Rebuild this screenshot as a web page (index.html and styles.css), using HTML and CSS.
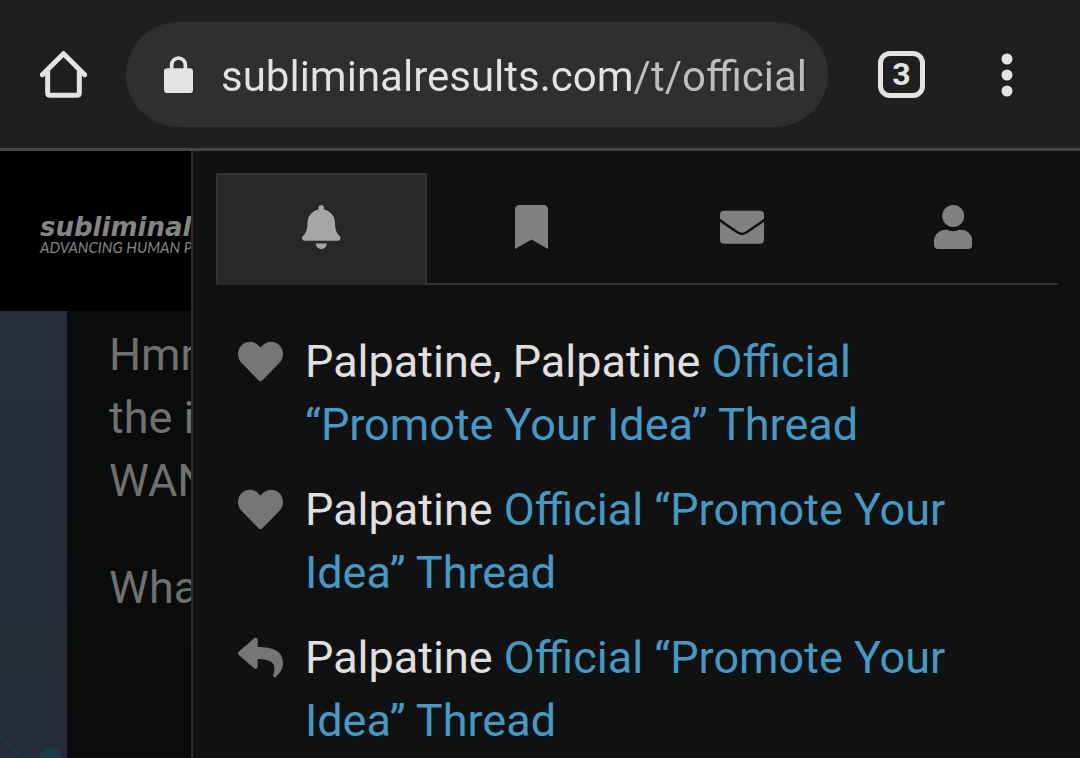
FILE: index.html
```html
<!DOCTYPE html>
<html lang="en">
<head>
<meta charset="utf-8">
<meta name="viewport" content="width=device-width, initial-scale=1">
<title>Official “Promote Your Idea” Thread</title>
<link rel="stylesheet" href="styles.css">
</head>
<body>
<header class="toolbar">
  <button class="icon-button" type="button" aria-label="Home">
    <svg class="home-icon" viewBox="0 0 141 141" aria-hidden="true"><path d="M7 71 70.500 8 134 71M23 60v65q0 8 8 8h79q8 0 8-8V60" fill="none" stroke="currentColor" stroke-width="15" stroke-linecap="round" stroke-linejoin="round"/></svg>
  </button>
  <div class="address">
    <svg class="lock-icon" viewBox="0 0 87 111" aria-hidden="true"><rect y="37" width="87" height="74" rx="10" fill="currentColor"/><path d="M23 42V27a20.500 21 0 0 1 41 0v15" fill="none" stroke="currentColor" stroke-width="11"/></svg>
    <input class="url" type="text" aria-label="Address" value="subliminalresults.com/t/official">
  </div>
  <button class="icon-button tab-count" type="button" aria-label="3 open tabs">3</button>
  <button class="icon-button menu" type="button" aria-label="Menu">
    <svg class="menu-icon" viewBox="0 0 12 44" aria-hidden="true"><g fill="currentColor"><circle cx="6" cy="6" r="5.500"/><circle cx="6" cy="22" r="5.500"/><circle cx="6" cy="38" r="5.500"/></g></svg>
  </button>
</header>
<main class="screen">
  <div class="page">
    <div class="brand">
      <div class="brand-name">subliminal</div>
      <div class="brand-tagline">ADVANCING HUMAN P</div>
    </div>
    <div class="page-body">
      <div class="backdrop">
        <svg class="network" viewBox="0 0 67 60" aria-hidden="true"><path d="M0 39 26 62" fill="none" stroke="#16394c" stroke-width="2"/><circle cx="51" cy="62" r="12" fill="#1d3a4a"/></svg>
      </div>
      <article class="post">
        <p>Hmm<br>the i<br>WAN</p>
        <p>What</p>
      </article>
    </div>
  </div>
  <aside class="panel">
    <nav class="tabs" aria-label="User menu">
      <button class="tab tab-active" type="button" aria-label="Notifications">
        <svg class="tab-icon" viewBox="0 0 448 512" aria-hidden="true"><path fill="currentColor" d="M224 512c35.320 0 63.970-28.650 63.970-64H160.030c0 35.350 28.650 64 63.970 64zm215.390-149.710c-19.320-20.760-55.470-51.990-55.470-154.290 0-77.700-54.480-139.900-127.940-155.160V32c0-17.670-14.320-32-31.980-32s-31.980 14.330-31.980 32v20.840C118.560 68.100 64.080 130.300 64.080 208c0 102.300-36.150 133.530-55.470 154.290-6 6.450-8.660 14.160-8.610 21.710.11 16.400 12.980 32 32.100 32h383.800c19.120 0 32-15.600 32.100-32 .05-7.550-2.610-15.270-8.610-21.710z"/></svg>
      </button>
      <button class="tab" type="button" aria-label="Bookmarks">
        <svg class="tab-icon" viewBox="0 0 384 512" aria-hidden="true"><path fill="currentColor" d="M0 512V48C0 21.490 21.490 0 48 0h288c26.510 0 48 21.490 48 48v464L192 400 0 512z"/></svg>
      </button>
      <button class="tab" type="button" aria-label="Messages">
        <svg class="tab-icon" viewBox="0 0 132 132" aria-hidden="true"><path fill="currentColor" d="M12 17h108q12 0 12 12v12L78 79q-12 8-24 0L0 41V29q0-12 12-12zM0 51l50 34q16 11 32 0l50-34v53q0 12-12 12H12q-12 0-12-12z"/></svg>
      </button>
      <button class="tab" type="button" aria-label="Profile">
        <svg class="tab-icon" viewBox="0 0 448 512" aria-hidden="true"><path fill="currentColor" d="M224 256c70.700 0 128-57.300 128-128S294.700 0 224 0 96 57.300 96 128s57.300 128 128 128zm89.600 32h-16.700c-22.200 10.200-46.900 16-72.900 16s-50.600-5.800-72.900-16h-16.700C60.200 288 0 348.200 0 422.400V464c0 26.500 21.500 48 48 48h352c26.500 0 48-21.500 48-48v-41.600c0-74.200-60.200-134.400-134.400-134.400z"/></svg>
      </button>
    </nav>
    <ul class="notifications">
      <li class="notification">
        <svg class="kind" viewBox="0 0 512 512" aria-hidden="true"><path fill="currentColor" d="M462.300 62.600C407.500 15.900 326 24.300 275.700 76.200L256 96.500l-19.700-20.300C186.100 24.300 104.500 15.900 49.700 62.600c-62.800 53.600-66.100 149.800-9.900 207.900l193.500 199.800c12.500 12.900 32.800 12.900 45.300 0l193.500-199.800c56.300-58.100 53-154.300-9.800-207.900z"/></svg>
        <div class="message">Palpatine, Palpatine <a class="topic" href="#">Official “Promote Your Idea” Thread</a></div>
      </li>
      <li class="notification">
        <svg class="kind" viewBox="0 0 512 512" aria-hidden="true"><path fill="currentColor" d="M462.300 62.600C407.500 15.900 326 24.300 275.700 76.200L256 96.500l-19.700-20.300C186.100 24.300 104.500 15.900 49.700 62.600c-62.800 53.600-66.100 149.800-9.900 207.900l193.500 199.800c12.500 12.900 32.800 12.900 45.300 0l193.500-199.800c56.300-58.100 53-154.300-9.800-207.900z"/></svg>
        <div class="message">Palpatine <a class="topic" href="#">Official “Promote Your Idea” Thread</a></div>
      </li>
      <li class="notification">
        <svg class="kind" viewBox="0 0 512 512" aria-hidden="true"><path fill="currentColor" d="M8.309 189.836L184.313 37.851C199.719 24.546 224 35.347 224 56.015v80.053c160.629 1.839 288 34.032 288 186.258 0 61.441-39.581 122.309-83.333 154.132-13.653 9.931-33.111-2.533-28.077-18.631 45.344-145.012-21.507-183.510-176.590-185.742V360c0 20.700-24.300 31.453-39.687 18.164l-176.004-152c-11.071-9.562-11.086-26.753 0-36.328z"/></svg>
        <div class="message">Palpatine <a class="topic" href="#">Official “Promote Your Idea” Thread</a></div>
      </li>
    </ul>
  </aside>
</main>
</body>
</html>
```

FILE: styles.css
```css
* {
  box-sizing: border-box;
}

body {
  display: flex;
  flex-direction: column;
  height: 100vh;
  margin: 0;
  overflow: hidden;
  background: #111;
  color: #e0e0e0;
  font-family: Roboto, "Liberation Sans", sans-serif;
  font-size: 45px;
  line-height: 63px;
}

button {
  padding: 0;
  border: 0;
  background: none;
  color: inherit;
  font: inherit;
}

svg {
  display: block;
  flex: none;
}

.toolbar {
  display: flex;
  flex: none;
  align-items: center;
  padding: 22px 67px 21px 40px;
  border-bottom: 3px solid #444;
  background: #1f1f1f;
  color: #e3e3e3;
}

.icon-button {
  flex: none;
}

.home-icon {
  width: 47px;
  height: 47px;
}

.address {
  display: flex;
  flex: 1;
  align-items: center;
  gap: 28px;
  min-width: 0;
  height: 105px;
  margin: 0 50px 0 39px;
  padding: 0 20px 0 38px;
  border-radius: 53px;
  background: #2e2f31;
}

.lock-icon {
  width: 29px;
  height: 37px;
}

.url {
  flex: 1;
  min-width: 0;
  height: 63px;
  padding: 4px 0 0;
  border: 0;
  outline: 0;
  background: linear-gradient(to right, #e3e3e3 412px, #bdbebf 412px);
  background-clip: text;
  -webkit-background-clip: text;
  -webkit-text-fill-color: transparent;
  color: #e3e3e3;
  font: inherit;
  font-size: 42px;
}

.tab-count {
  width: 47px;
  height: 47px;
  border: 5px solid;
  border-radius: 12px;
  font-family: Roboto, sans-serif;
  font-size: 32px;
  font-weight: 700;
  line-height: 37px;
}

.menu {
  margin-left: 76px;
}

.menu-icon {
  width: 12px;
  height: 44px;
}

.screen {
  display: grid;
  flex: 1;
  grid-template-columns: 191px 1fr;
  min-height: 0;
}

.page {
  display: flex;
  flex-direction: column;
  min-width: 0;
  overflow: hidden;
  background: #000;
  color: #707070;
  white-space: nowrap;
}

.brand {
  display: flex;
  flex: none;
  flex-direction: column;
  justify-content: center;
  height: 160px;
  padding: 10px 0 0 40px;
  color: #858585;
}

.brand-name {
  font: italic 700 26px/22px "DejaVu Sans", sans-serif;
}

.brand-tagline {
  font: italic 15px/18px Lato, sans-serif;
}

.page-body {
  display: flex;
  flex: 1;
}

.backdrop {
  display: flex;
  flex: none;
  align-items: flex-end;
  width: 67px;
  background: linear-gradient(#272f3c, #262c38 30%, #232c36 60%, #252b36);
}

.network {
  width: 67px;
  height: 60px;
}

.post {
  flex: 1;
  padding: 12px 0 0 42px;
  background: linear-gradient(#0a0c0b 75%, #0a0a0a 75%);
}

.post p {
  margin: 0 0 44px;
}

.panel {
  min-width: 0;
  padding: 22px 22px 0 23px;
  border-left: 2px solid #2b2b2b;
  background: #111;
}

.tabs {
  display: grid;
  grid-template-columns: repeat(4, 1fr);
}

.tab {
  display: flex;
  align-items: center;
  justify-content: center;
  height: 112px;
  padding: 0 0 2px;
  border-bottom: 2px solid #313131;
  color: #808080;
}

.tab-active {
  padding: 0 0 4px;
  border: 2px solid #333;
  border-bottom-color: #282828;
  background: #282828;
  color: #a6a6a6;
}

.tab-icon {
  height: 44px;
}

.notifications {
  display: flex;
  flex-direction: column;
  gap: 22px;
  margin: 45px 0 0;
  padding: 0 22px;
  list-style: none;
}

.notification {
  display: flex;
  gap: 22px;
}

.kind {
  width: 45px;
  height: 63px;
  color: #767676;
}

.message {
  flex: 1;
  min-width: 0;
}

.topic {
  color: #4799c4;
  text-decoration: none;
}
```
